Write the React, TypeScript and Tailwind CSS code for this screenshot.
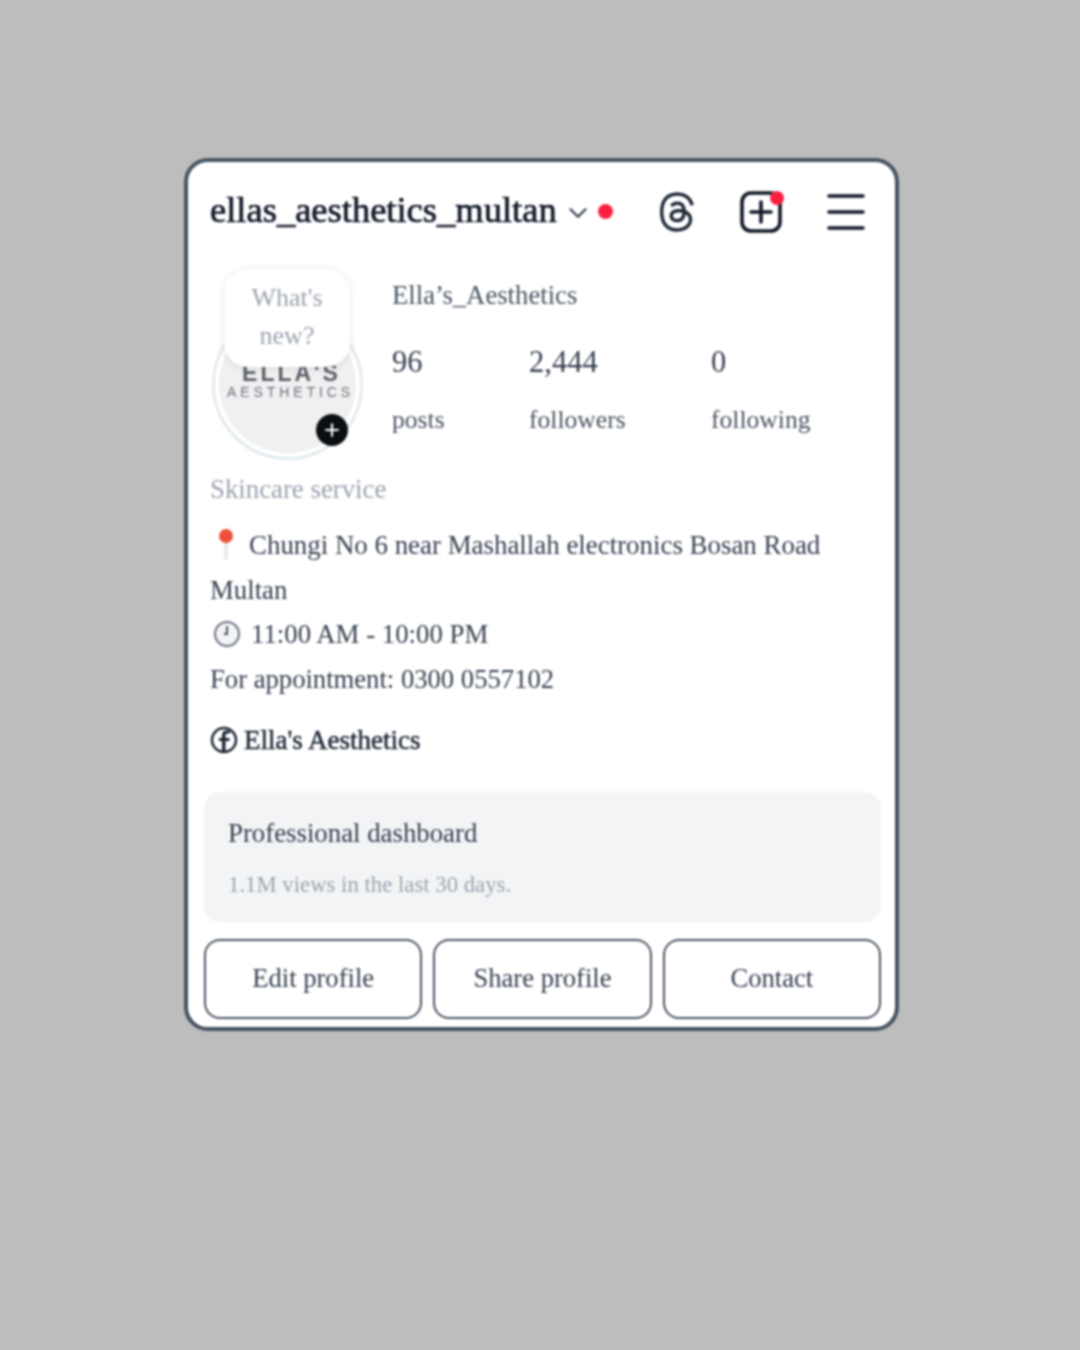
import React from 'react';
import { ChevronDown, Plus } from 'lucide-react';
import { FaThreads } from 'react-icons/fa6';

const serif = 'font-["Liberation_Serif",serif]';

function Stat({ value, label, className }: { value: string; label: string; className: string }) {
  return (
    <div className={className}>
      <div className="text-[30.5px] leading-[36px] text-[#374151]">{value}</div>
      <div className="mt-[22px] text-[25.6px] leading-[36px] text-[#4b5563]">{label}</div>
    </div>
  );
}

function Avatar() {
  return (
    <div className="relative h-[192px] w-[180px] shrink-0">
      <div className="absolute bottom-[1px] left-0 h-[151px] w-[151px] rounded-full border-[3px] border-[#e3ebef] bg-white p-[4px]">
        <div className="flex h-full w-full flex-col items-center justify-center rounded-full bg-[#f0f0f0]">
          <div className='mt-[-8px] ml-[8px] font-["Liberation_Sans",sans-serif] text-[23px] leading-[22px] font-bold tracking-[3px] whitespace-nowrap text-[#5b6068]'>ELLA'S</div>
          <div className='ml-[6px] font-["Liberation_Sans",sans-serif] text-[14px] leading-[16px] tracking-[3.9px] whitespace-nowrap text-[#6b7280]'>AESTHETICS</div>
        </div>
      </div>
      <div className="absolute top-0 left-[12px] flex h-[98px] w-[126px] flex-col items-center justify-center rounded-[24px] bg-white pb-[2px] text-center text-[26px] leading-[38px] text-[#9ca3af] shadow-[0_1px_8px_rgba(0,0,0,0.1)]">
        <span>What's</span>
        <span>new?</span>
      </div>
      <div className="absolute right-[44px] bottom-[15px] flex h-[32px] w-[32px] items-center justify-center rounded-full bg-[#0b0f14] text-white">
        <Plus size={20} strokeWidth={2.5} />
      </div>
    </div>
  );
}

function ProfileButton({ label }: { label: string }) {
  return (
    <button className="h-[80px] flex-1 rounded-[16px] border-[2.5px] border-[#4b5563] bg-white text-[26.6px] text-[#374151]">
      {label}
    </button>
  );
}

export default function App() {
  return (
    <div className={`min-h-[1350px] bg-[#bdbdbd] pt-[158px] pl-[184px] ${serif}`}>
      <div className="h-[873px] w-[715px] rounded-[24px] border-[4px] border-[#465362] bg-white blur-[1px]">
        <div className="flex h-[107px] items-center pb-[9px] pl-[22px]">
          <span className="mt-[-2px] text-[36.5px] leading-[46px] font-medium whitespace-nowrap text-[#111827] [-webkit-text-stroke:0.7px_#111827]">ellas_aesthetics_multan</span>
          <ChevronDown size={30} className="mt-[3px] ml-[6px] text-[#374151]" strokeWidth={1.8} />
          <span className="mt-[1px] ml-[5px] h-[15px] w-[15px] rounded-full bg-[#fb1f3f]" />
          <FaThreads size={42} className="mt-[2px] ml-[43px] text-[#1f2937]" />
          <div className="relative mt-[2px] ml-[42px]">
            <svg width="42" height="42" viewBox="0 0 42 42" fill="none" stroke="#111827" strokeWidth="3.6" strokeLinecap="round" className="block">
              <rect x="2" y="2" width="38" height="38" rx="9" />
              <path d="M21 11v20M11 21h20" />
            </svg>
            <span className="absolute top-0 right-[-2px] h-[14px] w-[14px] rounded-full bg-[#fb1f3f]" />
          </div>
          <svg width="38" height="36" viewBox="0 0 38 36" fill="none" stroke="#111827" strokeWidth="3.6" strokeLinecap="round" className="mt-[2px] ml-[45px]">
            <path d="M2 2h34M2 18h34M2 34h34" />
          </svg>
        </div>

        <div className="flex pl-[24px]">
          <Avatar />
          <div className="pt-[8px]">
            <div className="text-[26.7px] leading-[36px] text-[#4b5563]">Ella’s_Aesthetics</div>
            <div className="mt-[31px] flex">
              <Stat value="96" label="posts" className="w-[137px]" />
              <Stat value="2,444" label="followers" className="w-[182px]" />
              <Stat value="0" label="following" className="w-[120px]" />
            </div>
          </div>
        </div>

        <div className="pt-[9px] pl-[22px] text-[26.8px] leading-[44.5px] text-[#374151]">
          <div className="h-[45px] leading-[38px] text-[#9ca3af]">Skincare service</div>
          <div className="mt-[8px] flex items-center text-[26.9px] whitespace-nowrap">
            <svg width="32" height="34" viewBox="0 0 32 34" className="mr-[7px] shrink-0">
              <rect x="14.5" y="13" width="3" height="19" rx="1.5" fill="#e3e5e8" />
              <circle cx="16" cy="8" r="7" fill="#ef4f3a" />
            </svg>
            Chungi No 6 near Mashallah electronics Bosan Road
          </div>
          <div>Multan</div>
          <div className="flex items-center">
            <svg width="32" height="32" viewBox="0 0 32 32" fill="none" className="mr-[8px] ml-[1px] shrink-0">
              <circle cx="16" cy="16" r="12" fill="#f3f4f6" stroke="#6b7280" strokeWidth="2" />
              <path d="M16 8v8h-3" stroke="#4b5563" strokeWidth="2" />
            </svg>
            11:00 AM - 10:00 PM
          </div>
          <div className="text-[26.65px]">For appointment: 0300 0557102</div>
          <div className="mt-[17px] flex items-center text-[27px] font-medium text-[#1f2937] [-webkit-text-stroke:0.5px_#1f2937]">
            <svg width="28" height="28" viewBox="0 0 28 28" fill="none" className="mr-[6px] shrink-0">
              <circle cx="14" cy="14" r="12" stroke="#1f2937" strokeWidth="2.5" />
              <path d="M15.5 26V15h4v-3h-4V9.5c0-1.2.6-2 2-2h2.5V4.5h-3.5c-3 0-4.5 2-4.5 4.5v3H9v3h3v11z" fill="#1f2937" />
            </svg>
            Ella's Aesthetics
          </div>
        </div>

        <div className="mt-[29px] mr-[14px] ml-[16px] h-[130px] rounded-[16px] bg-[#f3f4f6] pt-[21px] pl-[24px]">
          <div className="text-[26.8px] leading-[40px] text-[#374151]">Professional dashboard</div>
          <div className="mt-[16px] text-[22.75px] leading-[32px] text-[#9ca3af]">1.1M views in the last 30 days.</div>
        </div>

        <div className="mt-[17px] mr-[14px] ml-[16px] flex gap-[11px]">
          <ProfileButton label="Edit profile" />
          <ProfileButton label="Share profile" />
          <ProfileButton label="Contact" />
        </div>
      </div>
    </div>
  );
}
